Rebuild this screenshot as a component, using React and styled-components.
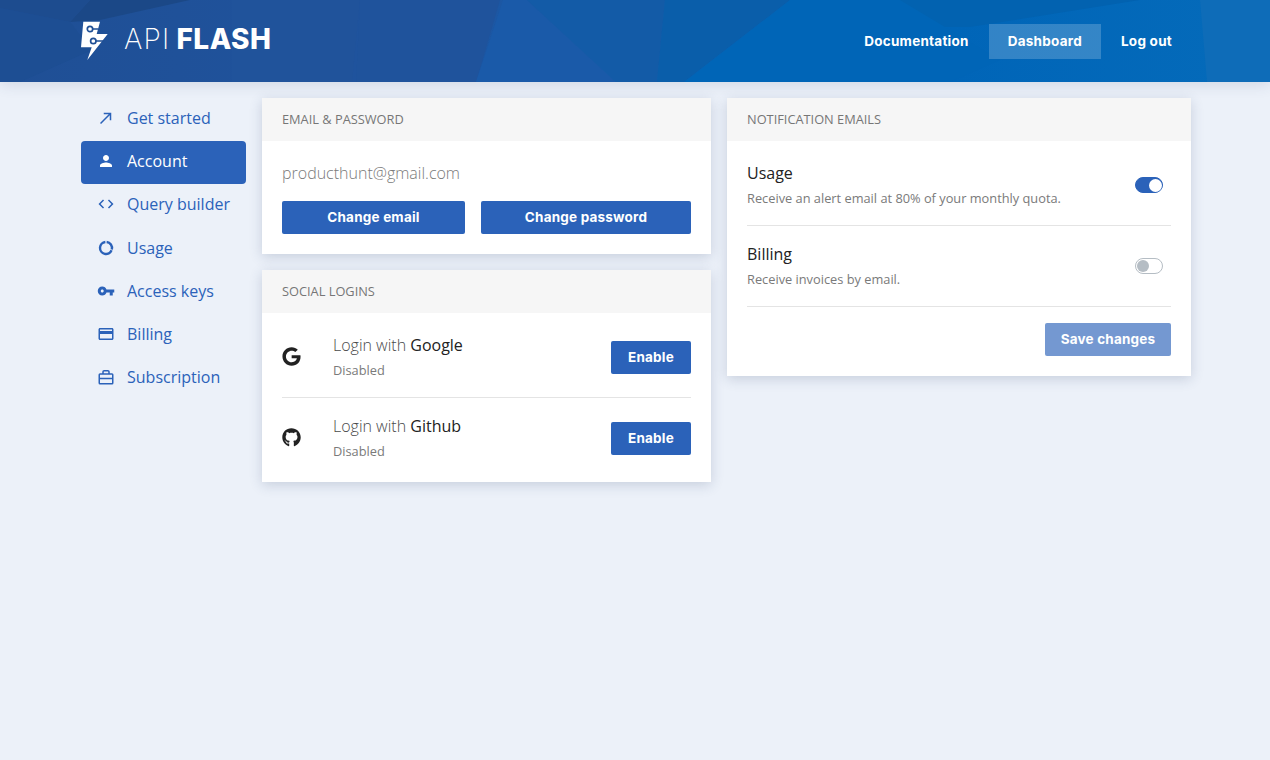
import React from "react";
import styled, { createGlobalStyle } from "styled-components";
import { FaGoogle, FaGithub } from "react-icons/fa";
import { MdNorthEast, MdPerson, MdCode, MdVpnKey, MdCreditCard } from "react-icons/md";

const BLUE = "#2b62b9";
const HEADING_FONT = '"Inter", "Liberation Sans", sans-serif';

const GlobalStyle = createGlobalStyle`
  * { box-sizing: border-box; }
  html, body { margin: 0; padding: 0; height: 100%; }
  body {
    background: #ecf1f9;
    font-family: "Open Sans", "Noto Sans", sans-serif;
    font-size: 16px;
    color: #222;
  }
`;

const Page = styled.div`
  min-height: 760px;
`;

const Header = styled.header`
  position: relative;
  height: 82px;
  background: linear-gradient(90deg, #1f4f95 0%, #1f549f 35%, #155fae 50%, #0065b8 75%, #056bba 100%);
  box-shadow: 0 2px 14px rgba(50, 70, 110, 0.16);
  overflow: hidden;
`;

const HeaderArt = styled.svg`
  position: absolute;
  inset: 0;
  width: 100%;
  height: 100%;
`;

const HeaderInner = styled.div`
  position: relative;
  width: 1110px;
  height: 100%;
  margin-left: 81px;
  display: flex;
  align-items: center;
  justify-content: space-between;
`;

const Logo = styled.a`
  display: flex;
  align-items: center;
  color: #fff;
  font-family: ${HEADING_FONT};
  font-size: 28px;
  line-height: 1;
  text-decoration: none;
`;

const LogoMark = styled.svg`
  width: 28px;
  height: 40px;
  margin-left: -1px;
  margin-right: 16px;
`;

const LogoWords = styled.span`
  padding-bottom: 4px;
`;

const LogoLight = styled.span`
  font-weight: 200;
  letter-spacing: 1.2px;
  margin-right: 6px;
`;

const LogoBold = styled.span`
  font-weight: 800;
  letter-spacing: 0.5px;
`;

const Nav = styled.nav`
  display: flex;
  gap: 1px;
`;

const NavLink = styled.a`
  height: 35px;
  padding: 0 19px;
  display: flex;
  align-items: center;
  color: #fff;
  font-family: ${HEADING_FONT};
  font-size: 13.5px;
  font-weight: 700;
  letter-spacing: 0.25px;
  background: ${({ $active }) => ($active ? "rgba(255, 255, 255, 0.2)" : "transparent")};
`;

const Content = styled.main`
  width: 1110px;
  margin-left: 81px;
  padding-top: 16px;
  display: grid;
  grid-template-columns: 165px 449px 464px;
  column-gap: 16px;
  align-items: start;
`;

const Sidebar = styled.aside`
  display: flex;
  flex-direction: column;
`;

const SideItem = styled.a`
  height: 43.2px;
  padding: 0 0 3px 16px;
  display: flex;
  align-items: center;
  gap: 12px;
  border-radius: 4px;
  color: ${({ $active }) => ($active ? "#fff" : BLUE)};
  background: ${({ $active }) => ($active ? BLUE : "transparent")};
  svg {
    width: 18px;
    height: 18px;
    flex: none;
  }
`;

const Column = styled.div`
  display: flex;
  flex-direction: column;
  gap: 16px;
`;

const Card = styled.section`
  background: #fff;
  box-shadow: 0 3px 12px rgba(50, 70, 110, 0.2);
`;

const CardHeader = styled.h2`
  margin: 0;
  height: 43px;
  padding: 0 20px 2px;
  display: flex;
  align-items: center;
  background: #f6f6f6;
  color: #767676;
  font-size: 12.8px;
  font-weight: 400;
  text-transform: uppercase;
`;

const EmailBody = styled.div`
  padding: 20px;
`;

const EmailText = styled.div`
  line-height: 24px;
  font-weight: 300;
  color: #7a7a7a;
  margin-bottom: 16px;
`;

const ButtonGrid = styled.div`
  display: grid;
  grid-template-columns: 183fr 210fr;
  column-gap: 16px;
`;

const Button = styled.button`
  height: 33px;
  padding: 0 0 1px;
  border: 0;
  border-radius: 2px;
  background: ${BLUE};
  color: #fff;
  font-family: ${HEADING_FONT};
  font-size: 13.5px;
  font-weight: 700;
  letter-spacing: 0.2px;
  opacity: ${({ disabled }) => (disabled ? 0.65 : 1)};
`;

const ListBody = styled.div`
  padding: 4px 20px;
`;

const Row = styled.div`
  display: flex;
  align-items: center;
  padding: 16px 0 18px;
  & + & {
    border-top: 1px solid #e4e4e4;
  }
`;

const ProviderIcon = styled.div`
  width: 51px;
  flex: none;
  display: flex;
  color: #222;
  font-size: 19px;
`;

const RowText = styled.div`
  flex: 1;
`;

const RowTitle = styled.div`
  line-height: 24px;
  font-weight: ${({ $light }) => ($light ? 300 : 400)};
  color: ${({ $light }) => ($light ? "#4a4a4a" : "#222")};
  b {
    font-weight: 400;
    color: #222;
  }
`;

const RowNote = styled.div`
  margin-top: 4px;
  line-height: 18px;
  font-size: 12.8px;
  color: #7a7a7a;
`;

const Toggle = styled.span`
  width: 28px;
  height: 16px;
  margin: 2px 8px 0 0;
  padding: 0 ${({ $on }) => ($on ? "0.5px" : "1px")};
  flex: none;
  display: flex;
  align-items: center;
  justify-content: ${({ $on }) => ($on ? "flex-end" : "flex-start")};
  border-radius: 8px;
  border: 1px solid ${({ $on }) => ($on ? BLUE : "#b5bdc4")};
  background: ${({ $on }) => ($on ? BLUE : "#fff")};
  &::after {
    content: "";
    width: ${({ $on }) => ($on ? "13px" : "12px")};
    height: ${({ $on }) => ($on ? "13px" : "12px")};
    border-radius: 50%;
    background: ${({ $on }) => ($on ? "#fff" : "#b5bdc4")};
  }
`;

const Footer = styled.div`
  padding: 16px 0;
  border-top: 1px solid #e4e4e4;
  display: flex;
  justify-content: flex-end;
`;

const WideButton = styled(Button)`
  width: 126px;
`;

const EnableButton = styled(Button)`
  width: 80px;
  margin-top: 3px;
  flex: none;
`;

const DonutIcon = () => (
  <svg viewBox="0 0 24 24" fill="none" stroke="currentColor" strokeWidth="3.2">
    <path d="M12.84 4.04A8 8 0 0 1 19.76 13.94" />
    <path d="M19.42 15A8 8 0 1 1 11.16 4.04" />
  </svg>
);

const BriefcaseIcon = () => (
  <svg viewBox="0 0 24 24" fill="none" stroke="currentColor" strokeWidth="2">
    <rect x="3" y="8" width="18" height="13" rx="1" />
    <path d="M3 14H21" />
    <path d="M8 8V5a1.5 1.5 0 0 1 1.5-1.5h5A1.5 1.5 0 0 1 16 5v3" />
  </svg>
);

const sideLinks = [
  { label: "Get started", icon: <MdNorthEast /> },
  { label: "Account", icon: <MdPerson />, active: true },
  { label: "Query builder", icon: <MdCode /> },
  { label: "Usage", icon: <DonutIcon /> },
  { label: "Access keys", icon: <MdVpnKey /> },
  { label: "Billing", icon: <MdCreditCard /> },
  { label: "Subscription", icon: <BriefcaseIcon /> },
];

const facets = [
  { points: "90,0 190,0 100,20 70,22", fill: "#1b4887" },
  { points: "0,0 90,0 70,22 0,8", fill: "#1d4c8f" },
  { points: "0,8 70,22 92,50 20,82 0,82", fill: "#1d4e93" },
  { points: "232,0 360,0 352,82 232,82", fill: "#20539b" },
  { points: "360,0 500,0 476,82 356,82", fill: "#1f539c" },
  { points: "503,0 527,0 616,82 476,82", fill: "#1a5aa9" },
  { points: "527,0 665,0 657,82 616,82", fill: "#135ba7" },
  { points: "665,0 790,0 684,82 657,82", fill: "#0a5eaa" },
  { points: "790,0 1100,0 945,27 1000,60 950,82 684,82", fill: "#0065b7" },
  { points: "900,0 1140,0 970,27 945,27", fill: "#0262b0" },
  { points: "1200,0 1270,0 1270,82 1207,82", fill: "#0e6cb8" },
];

export default function App() {
  return (
    <Page>
      <GlobalStyle />
      <Header>
        <HeaderArt viewBox="0 0 1270 82" preserveAspectRatio="none">
          {facets.map((facet) => (
            <polygon key={facet.points} points={facet.points} fill={facet.fill} />
          ))}
        </HeaderArt>
        <HeaderInner>
          <Logo>
            <LogoMark viewBox="0 0 28 40">
              <polygon points="3.3,0.7 20,0.7 16.7,13 27.7,13 7.3,39 11.7,26.3 1,26.3" fill="#fff" />
              <path d="M12 8H18.5M15.5 20H24" stroke="#1f4f95" strokeWidth="1.6" fill="none" />
              <circle cx="10" cy="8" r="2.7" fill="#fff" stroke="#1f4f95" strokeWidth="1.7" />
              <circle cx="13.3" cy="20" r="2.7" fill="#fff" stroke="#1f4f95" strokeWidth="1.7" />
            </LogoMark>
            <LogoWords>
              <LogoLight>API</LogoLight>
              <LogoBold>FLASH</LogoBold>
            </LogoWords>
          </Logo>
          <Nav>
            <NavLink>Documentation</NavLink>
            <NavLink $active>Dashboard</NavLink>
            <NavLink>Log out</NavLink>
          </Nav>
        </HeaderInner>
      </Header>
      <Content>
        <Sidebar>
          {sideLinks.map((link) => (
            <SideItem key={link.label} $active={link.active}>
              {link.icon}
              {link.label}
            </SideItem>
          ))}
        </Sidebar>
        <Column>
          <Card>
            <CardHeader>Email &amp; password</CardHeader>
            <EmailBody>
              <EmailText>producthunt@gmail.com</EmailText>
              <ButtonGrid>
                <Button>Change email</Button>
                <Button>Change password</Button>
              </ButtonGrid>
            </EmailBody>
          </Card>
          <Card>
            <CardHeader>Social logins</CardHeader>
            <ListBody>
              <Row>
                <ProviderIcon>
                  <FaGoogle />
                </ProviderIcon>
                <RowText>
                  <RowTitle $light>
                    Login with <b>Google</b>
                  </RowTitle>
                  <RowNote>Disabled</RowNote>
                </RowText>
                <EnableButton>Enable</EnableButton>
              </Row>
              <Row>
                <ProviderIcon>
                  <FaGithub />
                </ProviderIcon>
                <RowText>
                  <RowTitle $light>
                    Login with <b>Github</b>
                  </RowTitle>
                  <RowNote>Disabled</RowNote>
                </RowText>
                <EnableButton>Enable</EnableButton>
              </Row>
            </ListBody>
          </Card>
        </Column>
        <Column>
          <Card>
            <CardHeader>Notification emails</CardHeader>
            <ListBody>
              <Row>
                <RowText>
                  <RowTitle>Usage</RowTitle>
                  <RowNote>Receive an alert email at 80% of your monthly quota.</RowNote>
                </RowText>
                <Toggle $on />
              </Row>
              <Row>
                <RowText>
                  <RowTitle>Billing</RowTitle>
                  <RowNote>Receive invoices by email.</RowNote>
                </RowText>
                <Toggle />
              </Row>
              <Footer>
                <WideButton disabled>Save changes</WideButton>
              </Footer>
            </ListBody>
          </Card>
        </Column>
      </Content>
    </Page>
  );
}
